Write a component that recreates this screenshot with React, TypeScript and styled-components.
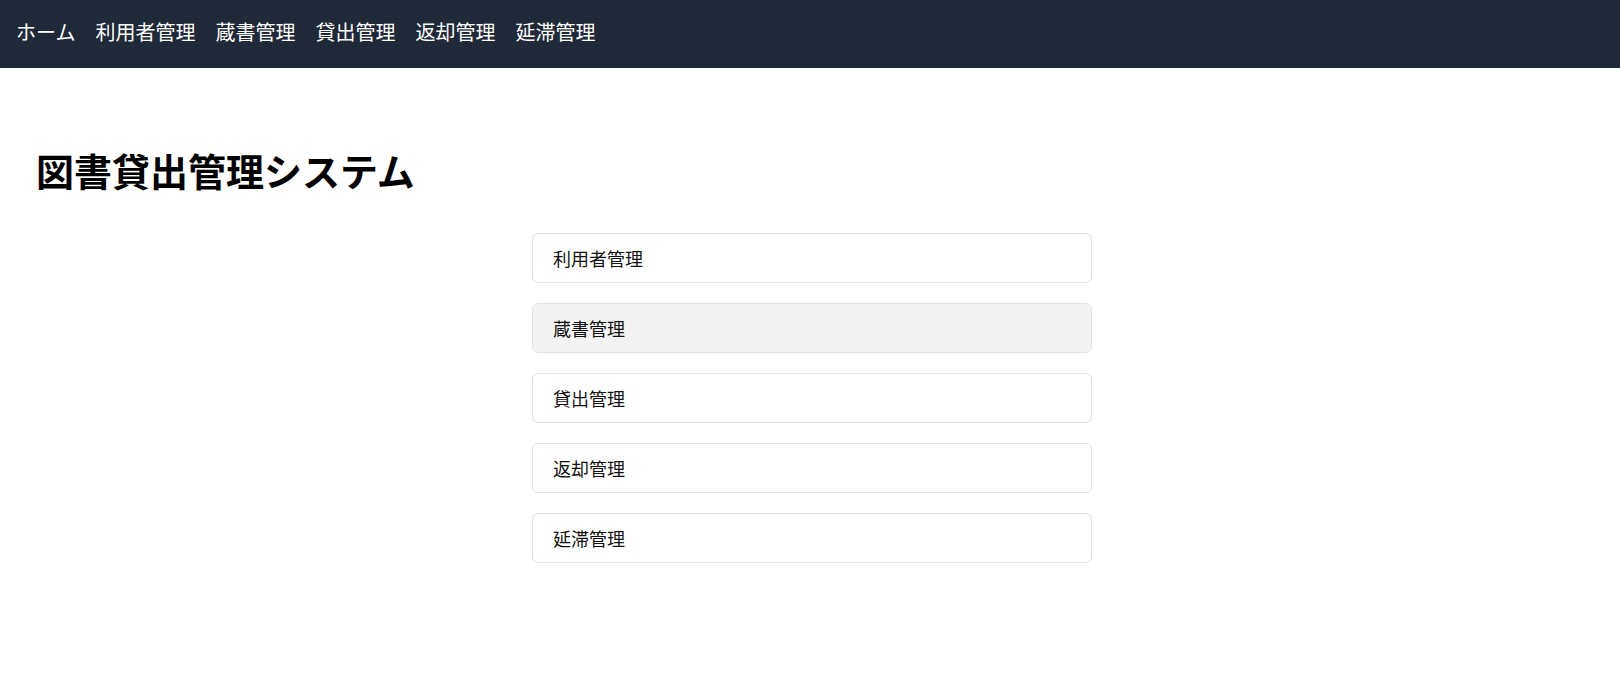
import React from 'react';
import styled, { createGlobalStyle } from 'styled-components';

const GlobalStyle = createGlobalStyle`
  html, body {
    margin: 0;
    padding: 0;
    background: #ffffff;
  }

  body {
    font-family: "Noto Sans CJK JP", "Noto Sans", sans-serif;
    color: #000000;
  }
`;

const StyledNav = styled.nav`
  height: 68px;
  background-color: #1f2937;
  display: flex;
  align-items: center;
  gap: 20px;
  padding: 0 16px;
  box-sizing: border-box;
`;

const StyledNavLink = styled.a`
  color: #ffffff;
  font-size: 20px;
  line-height: 28px;
  text-decoration: none;
  margin-top: -4px;
`;

const StyledMain = styled.main`
  padding: 0 36px 80px 36px;
`;

const StyledTitle = styled.h1`
  font-size: 38px;
  font-weight: 700;
  line-height: 41px;
  margin: 81px 0 43px 0;
`;

const StyledMenu = styled.ul`
  list-style: none;
  margin: 0 auto;
  padding: 0;
  width: 560px;
  display: flex;
  flex-direction: column;
  gap: 20px;
  position: relative;
  left: 2px;
`;

const StyledMenuItem = styled.li<{ $active?: boolean }>`
  border: 1px solid #e3e3e3;
  border-radius: 6px;
  background-color: ${(props) => (props.$active ? '#f3f3f3' : '#ffffff')};
  padding: 12px 20px;
  font-size: 18px;
  line-height: 24px;
  color: #111111;
`;

const links = ['ホーム', '利用者管理', '蔵書管理', '貸出管理', '返却管理', '延滞管理'];
const menu = ['利用者管理', '蔵書管理', '貸出管理', '返却管理', '延滞管理'];

const App = () => {
  return (
    <>
      <GlobalStyle />
      <StyledNav>
        {links.map((label) => (
          <StyledNavLink key={label} href="#">
            {label}
          </StyledNavLink>
        ))}
      </StyledNav>
      <StyledMain>
        <StyledTitle>図書貸出管理システム</StyledTitle>
        <StyledMenu>
          {menu.map((label) => (
            <StyledMenuItem key={label} $active={label === '蔵書管理'}>
              {label}
            </StyledMenuItem>
          ))}
        </StyledMenu>
      </StyledMain>
    </>
  );
};

export default App;
